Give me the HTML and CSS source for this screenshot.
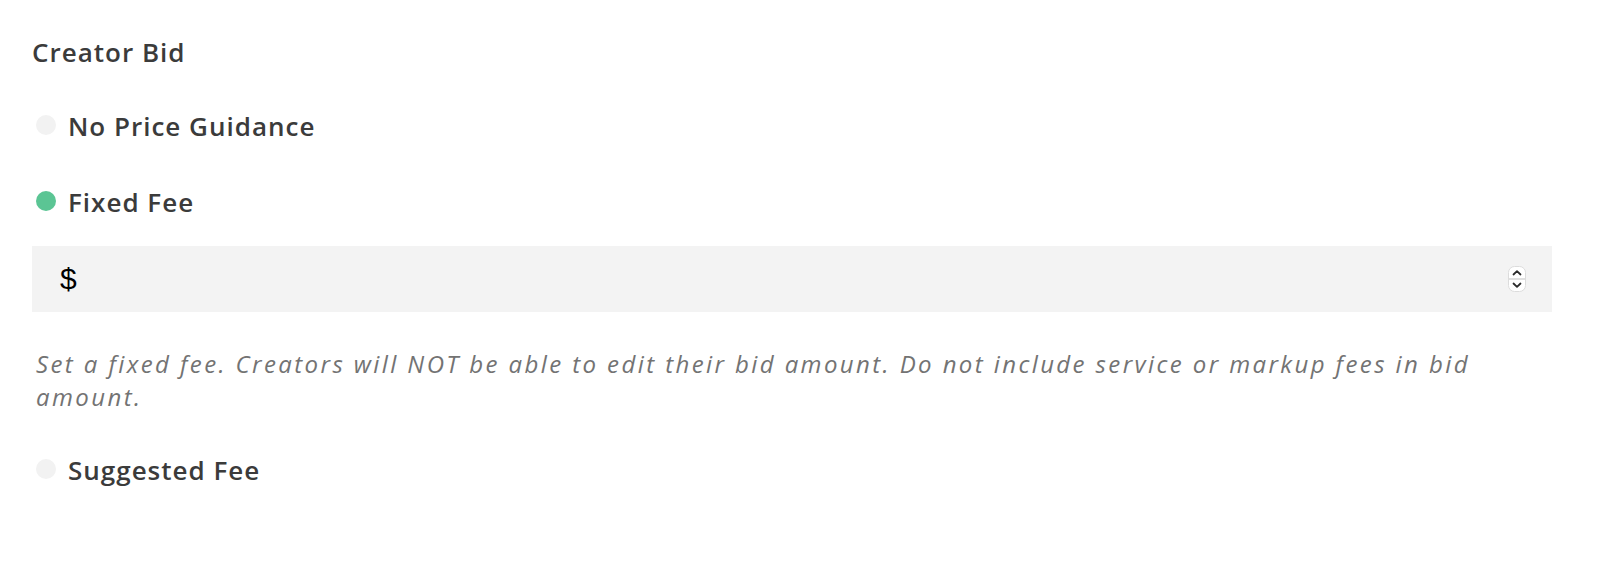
FILE: index.html
```html
<!DOCTYPE html>
<html lang="en">
<head>
  <meta charset="UTF-8" />
  <meta name="viewport" content="width=device-width, initial-scale=1.0" />
  <title>Creator Bid</title>
  <link rel="stylesheet" href="styles.css">
</head>
<body>
  <form class="bid-form">
    <h2 class="bid-title">Creator Bid</h2>

    <label class="option">
      <span class="dot"></span>
      <span class="option-label">No Price Guidance</span>
    </label>

    <label class="option">
      <span class="dot dot-on"></span>
      <span class="option-label">Fixed Fee</span>
    </label>

    <div class="fee-field">
      <span class="currency">$</span>
      <input type="text" class="fee-input" />
      <svg class="spinner" width="18" height="26" viewBox="0 0 18 26">
        <rect x="0.5" y="0.5" width="17" height="25" rx="6" fill="#fff" stroke="#dcdcdc" />
        <line x1="1" y1="13" x2="17" y2="13" stroke="#d6d6d6" stroke-width="1.5" />
        <path d="M5.5 8.5 L9 5.2 L12.5 8.5" fill="none" stroke="#2b2b2b" stroke-width="1.8" stroke-linecap="round" stroke-linejoin="round" />
        <path d="M5.5 17.5 L9 20.8 L12.5 17.5" fill="none" stroke="#2b2b2b" stroke-width="1.8" stroke-linecap="round" stroke-linejoin="round" />
      </svg>
    </div>

    <p class="hint">Set a fixed fee. Creators will NOT be able to edit their bid amount. Do not include service or markup fees in bid amount.</p>

    <label class="option">
      <span class="dot"></span>
      <span class="option-label">Suggested Fee</span>
    </label>
  </form>
</body>
</html>
```

FILE: styles.css
```css
body {
  margin: 0;
  font-family: 'Open Sans', 'Liberation Sans', sans-serif;
  background: #fff;
  color: #3b3b3b;
}
.bid-form {
  width: 1520px;
  padding: 36px 0 0 32px;
  display: flex;
  flex-direction: column;
}
.bid-title {
  margin: 0 0 42px;
  font-size: 26px;
  line-height: 32px;
  font-weight: 600;
  letter-spacing: 1px;
}
.option {
  display: flex;
  align-items: center;
  gap: 12px;
  margin-bottom: 44px;
  font-size: 26px;
  line-height: 32px;
  font-weight: 600;
  letter-spacing: 1px;
  cursor: pointer;
}
.dot {
  width: 20px;
  height: 20px;
  border-radius: 50%;
  background: #f2f2f2;
  margin-left: 4px;
  margin-top: -2px;
}
.dot-on {
  background: #5bc594;
}
.fee-field {
  display: flex;
  align-items: center;
  height: 66px;
  margin-top: -16px;
  padding: 0 26px 0 28px;
  background: #f3f3f3;
}
.currency {
  font-family: 'Liberation Sans', Arial, sans-serif;
  font-size: 30px;
  color: #000;
}
.fee-input {
  flex: 1;
  border: none;
  background: transparent;
  font-size: 26px;
  outline: none;
}
.spinner {
  display: block;
}
.hint {
  margin: 35px 0 41px;
  padding-left: 4px;
  font-size: 24px;
  line-height: 33px;
  font-style: italic;
  letter-spacing: 2.4px;
  color: #737373;
}
```
